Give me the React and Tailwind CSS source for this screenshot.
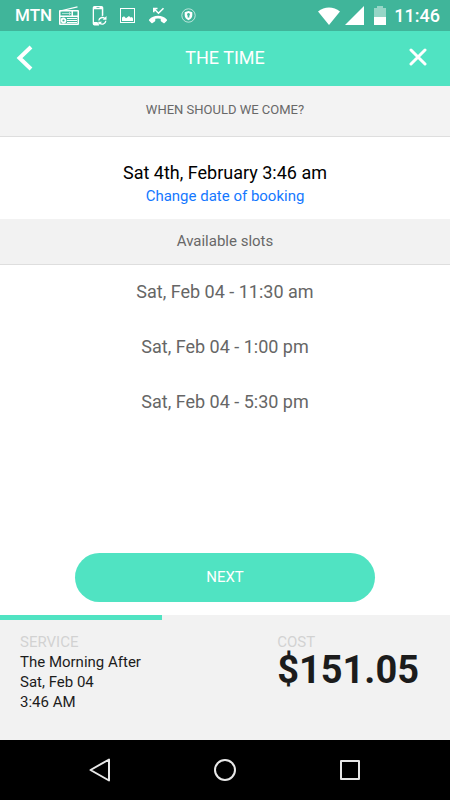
const slots = [
  "Sat, Feb 04 - 11:30 am",
  "Sat, Feb 04 - 1:00 pm",
  "Sat, Feb 04 - 5:30 pm",
];

const RadioIcon = () => (
  <svg viewBox="0 0 20 19" className="h-[19px] w-5" aria-hidden="true">
    <path d="M1 5 18.5 0.8" stroke="white" strokeWidth="1.2" fill="none" />
    <path
      fillRule="evenodd"
      fill="white"
      d="M1 4h18a1 1 0 0 1 1 1v13a1 1 0 0 1-1 1H1a1 1 0 0 1-1-1V5a1 1 0 0 1 1-1ZM1.500 5.500V9.500H12.500V5.500ZM14 5.500V9.500H18.500V5.500ZM1.500 11V17.500h17V11Z"
    />
    <path d="M8 12.500h10M8 14.500h10M8 16.500h10" stroke="white" strokeWidth="1" />
    <circle cx="4.500" cy="14.500" r="2" fill="none" stroke="white" strokeWidth="1.800" />
    <path d="M3 7.500h9M10.500 6v3" stroke="white" strokeWidth="0.800" opacity="0.700" />
  </svg>
);

const PhoneSyncIcon = () => (
  <svg viewBox="0 0 15 20" className="h-5 w-[15px]" aria-hidden="true">
    <path
      fillRule="evenodd"
      fill="white"
      d="M2.500 0h7A1.800 1.800 0 0 1 11.300 1.800V9.600L9.800 10.400V3.200H2V16h3.500l1.500 3.600H2.500A1.800 1.800 0 0 1 .7 17.800v-16A1.800 1.800 0 0 1 2.500 0ZM4.500 1.300v.7h3v-.7Z"
    />
    <path
      d="M6.800 14.500a3.600 3.600 0 0 1 6-2M13.800 14.800a3.600 3.600 0 0 1-6 2.400"
      fill="none"
      stroke="white"
      strokeWidth="1.400"
    />
    <path d="M14.500 10v3.800h-3.800ZM6.300 19.500v-3.800h3.800Z" fill="white" />
  </svg>
);

const PictureIcon = () => (
  <svg viewBox="0 0 15 15" className="size-[15px]" aria-hidden="true">
    <rect x="0.500" y="0.500" width="14" height="14" fill="none" stroke="white" />
    <path d="M2 13V9.500l2-1.300 2 2L9 8l1.500 1.500L12 9l1 1.500V13Z" fill="white" />
  </svg>
);

const MissedCallIcon = () => (
  <svg viewBox="0 0 20 17" className="h-[17px] w-5" aria-hidden="true">
    <path
      d="M5.800 5.200V1.500h3.700M6 1.700l4.500 4.500 5-5"
      fill="none"
      stroke="white"
      strokeWidth="1.600"
    />
    <path
      fill="white"
      d="M10 8.800c3.500 0 6.500 1.300 8.800 3.600.4.400.4.900 0 1.300l-2.200 2.200c-.4.400-.8.400-1.200 0l-2.200-1.500c-.3-.2-.5-.5-.5-.9v-1.700a11 11 0 0 0-5.400 0v1.700c0 .4-.2.700-.5.900l-2.200 1.500c-.4.400-.8.400-1.200 0l-2.200-2.200c-.4-.4-.4-.9 0-1.300C3.500 10.100 6.500 8.800 10 8.800Z"
    />
  </svg>
);

const ShieldIcon = () => (
  <svg viewBox="0 0 15 15" className="size-[15px]" aria-hidden="true">
    <circle cx="7.500" cy="7.500" r="6.700" fill="none" stroke="white" strokeWidth="0.800" opacity="0.800" />
    <path
      fillRule="evenodd"
      fill="white"
      d="M7.500 3 11.300 4.200v3c0 2.300-1.500 4-3.800 5-2.300-1-3.800-2.700-3.800-5v-3ZM7.500 5a1.500 1.500 0 0 0-.7 2.800L6.500 9.500h2l-.3-1.700A1.500 1.500 0 0 0 7.500 5Z"
    />
  </svg>
);

const StatusBar = () => (
  <div className="flex h-[31px] items-center justify-between bg-[#40b59a] pr-[10px] pl-[15px] font-medium text-white">
    <div className="flex items-center">
      <span className="mr-[7px] text-[17px]">MTN</span>
      <div className="flex items-center gap-[13px]">
        <RadioIcon />
        <PhoneSyncIcon />
        <PictureIcon />
        <MissedCallIcon />
        <ShieldIcon />
      </div>
    </div>
    <div className="flex items-center">
      <svg viewBox="0 0 22 18" className="mr-[5px] h-[18px] w-[22px]" aria-hidden="true">
        <path d="M0 4.500C6.500-1 15.500-1 22 4.500L11 18Z" fill="white" />
      </svg>
      <svg viewBox="0 0 19 19" className="mr-[10px] size-[19px]" aria-hidden="true">
        <path d="M0 19 19 0v19Z" fill="white" />
      </svg>
      <svg viewBox="0 0 12 19" className="mr-2 h-[19px] w-3" aria-hidden="true">
        <path d="M0 2h3V0h6v2h3v9H0Z" fill="white" opacity="0.450" />
        <path d="M0 11h12v8H0Z" fill="white" />
      </svg>
      <span className="text-[18px]">11:46</span>
    </div>
  </div>
);

const Header = () => (
  <header className="flex h-[55px] items-center justify-between bg-[#50e3c2] px-4 pb-[2px] text-white">
    <button type="button" aria-label="Back" className="flex w-8">
      <svg viewBox="0 0 18 26" className="h-[26px] w-[18px]" aria-hidden="true">
        <path d="M15 2 3.500 13 15 24" fill="none" stroke="white" strokeWidth="4" />
      </svg>
    </button>
    <h1 className="text-[18px]">THE TIME</h1>
    <button type="button" aria-label="Close" className="flex w-8 justify-center pb-[2px]">
      <svg viewBox="0 0 18 18" className="size-[18px]" aria-hidden="true">
        <path
          d="m2 2 14 14m0-14-14 14"
          fill="none"
          stroke="white"
          strokeWidth="3"
          strokeLinecap="round"
        />
      </svg>
    </button>
  </header>
);

const Summary = () => (
  <footer className="h-[125px] bg-[#f2f2f2] text-[#1c1c1c]">
    {/* booking progress */}
    <div className="h-[5px] w-[36%] bg-[#50e3c2]" />
    <div className="flex justify-between pt-3 pr-[31px] pl-5">
      <div className="text-[15px] leading-5">
        <p className="text-[#d2d2d2]">SERVICE</p>
        <p>The Morning After</p>
        <p>Sat, Feb 04</p>
        <p>3:46 AM</p>
      </div>
      <div>
        <p className="text-[15px] leading-5 text-[#d2d2d2]">COST</p>
        <p className="text-[38px] leading-9 font-bold">$151.05</p>
      </div>
    </div>
  </footer>
);

const NavBar = () => (
  <nav className="flex h-[60px] items-center justify-around bg-black px-[37px]">
    <button type="button" aria-label="System back">
      <svg viewBox="0 0 24 24" className="size-6" aria-hidden="true">
        <path d="M21 1.500v21L2.500 12Z" fill="none" stroke="#e8e8e8" strokeWidth="2" strokeLinejoin="round" />
      </svg>
    </button>
    <button type="button" aria-label="Home">
      <svg viewBox="0 0 24 24" className="size-6" aria-hidden="true">
        <circle cx="12" cy="12" r="10" fill="none" stroke="#e8e8e8" strokeWidth="2" />
      </svg>
    </button>
    <button type="button" aria-label="Recent apps">
      <svg viewBox="0 0 24 24" className="size-6" aria-hidden="true">
        <rect x="3" y="3" width="18" height="18" fill="none" stroke="#e8e8e8" strokeWidth="2" strokeLinejoin="round" />
      </svg>
    </button>
  </nav>
);

const App = () => {
  return (
    <div className="flex min-h-screen flex-col bg-white font-[Roboto,sans-serif]">
      <StatusBar />
      <Header />
      <main className="flex flex-1 flex-col text-center">
        <h2 className="border-b border-[#dedede] bg-[#f3f3f3] pt-[14px] pb-4 text-[13px] leading-5 text-[#686868]">
          WHEN SHOULD WE COME?
        </h2>
        <div className="flex flex-col items-center pt-6 pb-3">
          <p className="text-[18px] leading-6 text-black">Sat 4th, February 3:46 am</p>
          <button type="button" className="text-[15px] leading-[22px] text-[#1478ff]">
            Change date of booking
          </button>
        </div>
        <h2 className="border-b border-[#dedede] bg-[#f2f2f2] pt-3 pb-[13px] text-[15px] leading-5 text-[#686868]">
          Available slots
        </h2>
        <ul className="flex flex-col">
          {slots.map((slot) => (
            <li key={slot}>
              <button type="button" className="h-[55px] w-full pb-[2px] text-[18px] text-[#666666]">
                {slot}
              </button>
            </li>
          ))}
        </ul>
        <button
          type="button"
          className="mx-auto mt-auto mb-[13px] h-[49px] w-2/3 rounded-full bg-[#50e3c2] text-[15px] text-white"
        >
          NEXT
        </button>
      </main>
      <Summary />
      <NavBar />
    </div>
  );
};

export default App;
